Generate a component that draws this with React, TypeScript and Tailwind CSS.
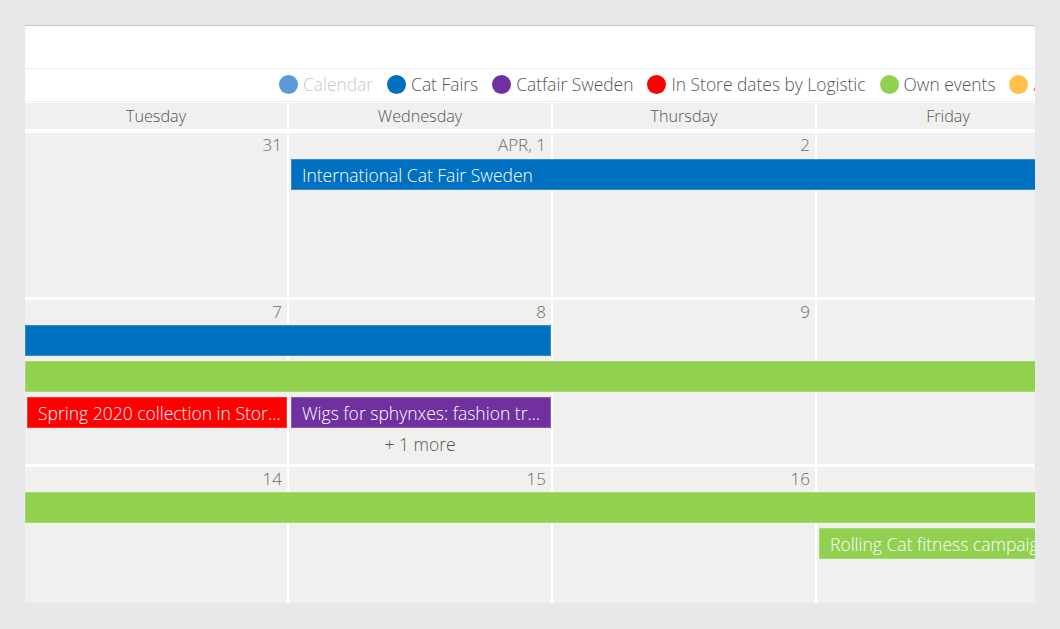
import React from "react";

interface LegendItem {
  label: string;
  dot: string;
  text: string;
}

const legend: LegendItem[] = [
  { label: "Calendar", dot: "bg-[#5b9bd5]", text: "text-[#c8c8c8]" },
  { label: "Cat Fairs", dot: "bg-[#0070c0]", text: "text-[#555555]" },
  { label: "Catfair Sweden", dot: "bg-[#7030a0]", text: "text-[#555555]" },
  { label: "In Store dates by Logistic", dot: "bg-[#ff0000]", text: "text-[#555555]" },
  { label: "Own events", dot: "bg-[#92d050]", text: "text-[#555555]" },
  { label: "Actions", dot: "bg-[#ffc04c]", text: "text-[#555555]" },
];

const days = ["Tuesday", "Wednesday", "Thursday", "Friday", "Saturday"];

const colStart = ["col-start-1", "col-start-2", "col-start-3", "col-start-4", "col-start-5"];

interface CalEvent {
  title: string;
  className: string;
}

function Week({ numbers, events, more, top = "grid-rows-[25px_36px_36px_36px_1fr]" }: {
  numbers: string[];
  events: CalEvent[];
  more?: string;
  top?: string;
}) {
  return (
    <div className={`grid grid-cols-[repeat(5,262px)] gap-x-[2px] h-[164px] ${top}`}>
      {numbers.map((n, i) => (
        <div key={i} className={`${colStart[i]} row-start-1 row-end-6 bg-[#f0f0ef] text-right pr-[5px] pt-[1px] text-[17px] leading-[22px] text-[#6b6b6b]`}>
          {n}
        </div>
      ))}
      {events.map((e, i) => (
        <div
          key={i}
          className={`${e.className} h-[31px] border border-white/20 text-white text-[17.5px] leading-[30px] pl-[10px] pr-[3px] whitespace-nowrap overflow-hidden text-ellipsis`}
        >
          {e.title}
        </div>
      ))}
      {more && (
        <div className="col-start-2 row-start-5 text-center text-[17.5px] text-[#555555] leading-[20px] pt-[1px]">
          {more}
        </div>
      )}
    </div>
  );
}

export default function App() {
  return (
    <div className="min-h-screen bg-[#e8e8ea] pt-[25px] pl-[25px]" style={{ fontFamily: '"Open Sans", "Liberation Sans", sans-serif' }}>
      <div className="w-[1010px] h-[578px] bg-white border-t border-[#c6c6c6] overflow-hidden">
        <div className="h-[43px] border-b border-[#eeeeee]" />
        <div className="h-[33px] border-b border-[#eeeeee] flex items-center pl-[254px] pb-[1px] whitespace-nowrap">
          {legend.map((l) => (
            <div key={l.label} className="flex items-center mr-[14px] shrink-0">
              <span className={`w-[19px] h-[19px] rounded-full ${l.dot}`} />
              <span className={`ml-[5px] text-[17.4px] font-light ${l.text}`}>{l.label}</span>
            </div>
          ))}
        </div>
        <div className="w-[1318px] pt-[1px] font-light">
          <div className="flex gap-[2px]">
            {days.map((d) => (
              <div key={d} className="w-[262px] h-[26px] bg-[#f0f0ef] text-center text-[16.2px] leading-[26px] text-[#555555]">
                {d}
              </div>
            ))}
          </div>
          <div className="flex flex-col gap-[3px] mt-[4px]">
            <Week
              top="grid-rows-[26px_36px_36px_36px_1fr]"
              numbers={["31", "APR, 1", "2", "3", "4"]}
              events={[
                { title: "International Cat Fair Sweden", className: "col-start-2 col-end-6 row-start-2 ml-[2px] bg-[#0070c0]" },
              ]}
            />
            <Week
              numbers={["7", "8", "9", "10", "11"]}
              events={[
                { title: "", className: "col-start-1 col-end-3 row-start-2 bg-[#0070c0]" },
                { title: "", className: "col-start-1 col-end-6 row-start-3 bg-[#92d050]" },
                { title: "Spring 2020 collection in Stores", className: "col-start-1 col-end-2 row-start-4 ml-[2px] bg-[#ff0000]" },
                { title: "Wigs for sphynxes: fashion trends", className: "col-start-2 col-end-3 row-start-4 ml-[2px] bg-[#7030a0]" },
              ]}
              more="+ 1 more"
            />
            <Week
              numbers={["14", "15", "16", "17", "18"]}
              events={[
                { title: "", className: "col-start-1 col-end-6 row-start-2 bg-[#92d050]" },
                { title: "Rolling Cat fitness campaign", className: "col-start-4 col-end-6 row-start-3 ml-[2px] bg-[#92d050]" },
              ]}
            />
          </div>
        </div>
      </div>
    </div>
  );
}
